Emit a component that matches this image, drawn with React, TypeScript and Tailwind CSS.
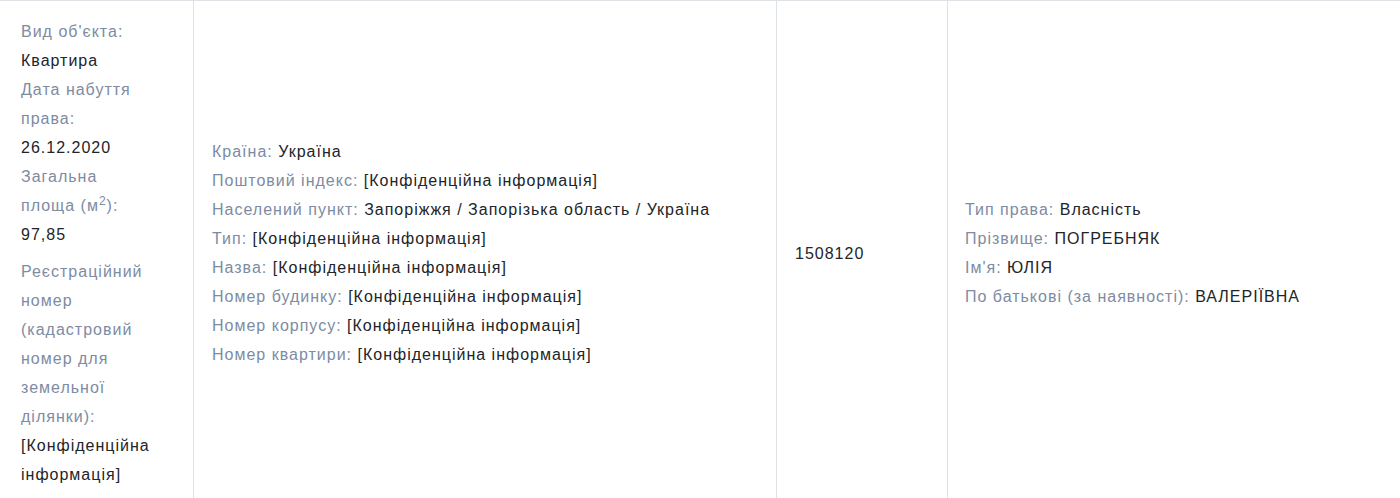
import React from "react";

const L = "text-[#7d8ba3]";
const V = "text-[#212529]";

function Pair({ label, value }: { label: React.ReactNode; value: string }) {
  return (
    <div>
      <span className={L}>{label}</span> <span className={V}>{value}</span>
    </div>
  );
}

export default function App() {
  return (
    <div
      className="w-[1400px] h-[498px] overflow-hidden bg-white text-[16px] leading-[29px] tracking-[1px]"
      style={{ fontFamily: '"Liberation Sans", Arial, sans-serif' }}
    >
      <div className="grid grid-cols-[193px_583px_171px_1fr] border-t border-[#dee2e6]">
        <div className="pl-[21px] pr-[38px] pt-[16px] pb-[16px]">
          <div className={L}>Вид об'єкта:</div>
          <div className={V}>Квартира</div>
          <div className={L}>Дата набуття права:</div>
          <div className={V}>26.12.2020</div>
          <div className={L}>
            Загальна площа (м<sup>2</sup>):
          </div>
          <div className={V}>97,85</div>
          <div className={`${L} mt-2`}>
            Реєстраційний номер (кадастровий номер для земельної ділянки):
          </div>
          <div className={V}>[Конфіденційна інформація]</div>
        </div>
        <div className="flex flex-col justify-center border-l border-[#dee2e6] px-[18px] py-[16px]">
          <Pair label="Країна:" value="Україна" />
          <Pair label="Поштовий індекс:" value="[Конфіденційна інформація]" />
          <Pair
            label="Населений пункт:"
            value="Запоріжжя / Запорізька область / Україна"
          />
          <Pair label="Тип:" value="[Конфіденційна інформація]" />
          <Pair label="Назва:" value="[Конфіденційна інформація]" />
          <Pair label="Номер будинку:" value="[Конфіденційна інформація]" />
          <Pair label="Номер корпусу:" value="[Конфіденційна інформація]" />
          <Pair label="Номер квартири:" value="[Конфіденційна інформація]" />
        </div>
        <div className={`flex flex-col justify-center border-l border-[#dee2e6] px-[18px] py-[16px] ${V}`}>
          1508120
        </div>
        <div className="flex flex-col justify-center border-l border-[#dee2e6] px-[17px] py-[16px]">
          <Pair label="Тип права:" value="Власність" />
          <Pair label="Прізвище:" value="ПОГРЕБНЯК" />
          <Pair label="Ім'я:" value="ЮЛІЯ" />
          <Pair label="По батькові (за наявності):" value="ВАЛЕРІЇВНА" />
        </div>
      </div>
    </div>
  );
}
